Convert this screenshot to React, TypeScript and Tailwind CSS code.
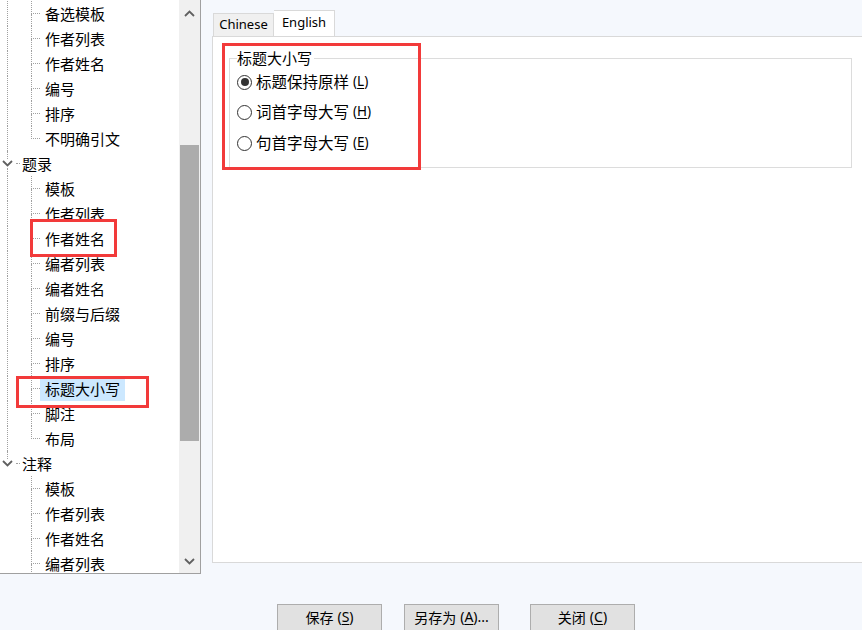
import React from "react";

const FONT = '"Microsoft YaHei", "Noto Sans CJK SC", "Noto Sans", sans-serif';
const LATIN = '"Noto Sans", "Open Sans", "Noto Sans CJK SC", sans-serif';

type Row =
  | { kind: "parent"; label: string; last?: boolean }
  | { kind: "child"; label: string; lastChild?: boolean; parentLast?: boolean; selected?: boolean };

const rows: Row[] = [
  { kind: "child", label: "备选模板" },
  { kind: "child", label: "作者列表" },
  { kind: "child", label: "作者姓名" },
  { kind: "child", label: "编号" },
  { kind: "child", label: "排序" },
  { kind: "child", label: "不明确引文", lastChild: true },
  { kind: "parent", label: "题录" },
  { kind: "child", label: "模板" },
  { kind: "child", label: "作者列表" },
  { kind: "child", label: "作者姓名" },
  { kind: "child", label: "编者列表" },
  { kind: "child", label: "编者姓名" },
  { kind: "child", label: "前缀与后缀" },
  { kind: "child", label: "编号" },
  { kind: "child", label: "排序" },
  { kind: "child", label: "标题大小写", selected: true },
  { kind: "child", label: "脚注" },
  { kind: "child", label: "布局", lastChild: true },
  { kind: "parent", label: "注释", last: true },
  { kind: "child", label: "模板", parentLast: true },
  { kind: "child", label: "作者列表", parentLast: true },
  { kind: "child", label: "作者姓名", parentLast: true },
  { kind: "child", label: "编者列表", parentLast: true },
];

const DOT = "border-dotted border-[#a0a0a0]";

function Chevron({ up }: { up?: boolean }) {
  return (
    <svg width="11" height="7" viewBox="0 0 11 7">
      <polyline
        points={up ? "1,6 5.5,1.5 10,6" : "1,1 5.5,5.5 10,1"}
        fill="none"
        stroke="#606060"
        strokeWidth="1.8"
      />
    </svg>
  );
}

function TreeRow({ row }: { row: Row }) {
  if (row.kind === "parent") {
    return (
      <div className="flex h-[25px] items-stretch">
        <div className="flex w-[15px] flex-col">
          <div className={`ml-[7px] h-[8px] border-l ${DOT}`} />
          <div className="flex h-[9px] items-center justify-start pl-[2px]">
            <Chevron />
          </div>
          <div className={`ml-[7px] flex-1 ${row.last ? "" : `border-l ${DOT}`}`} />
        </div>
        <div className="flex w-[7px] items-center">
          <div className={`ml-[1px] w-[4px] border-t ${DOT}`} />
        </div>
        <div className="flex items-center text-[15px] leading-none text-black">
          {row.label}
        </div>
      </div>
    );
  }
  return (
    <div className="flex h-[25px] items-stretch">
      <div className={`ml-[7px] w-[24px] ${row.parentLast ? "" : `border-l ${DOT}`}`} />
      <div className="flex w-[9px] flex-col">
        <div className={`h-[13px] border-l border-b ${DOT}`} />
        <div className={`flex-1 ${row.lastChild ? "" : `border-l ${DOT}`}`} />
      </div>
      <div className="flex items-center">
        <div
          className={`flex h-[24px] items-center px-[5px] text-[15px] leading-none text-black ${
            row.selected ? "bg-[#cce8ff]" : ""
          }`}
        >
          {row.label}
        </div>
      </div>
    </div>
  );
}

function Radio({ checked, label, hot }: { checked?: boolean; label: string; hot: string }) {
  return (
    <div className="flex h-[30px] items-center">
      <div className="flex h-[15px] w-[15px] items-center justify-center rounded-full border border-[#333333] bg-white">
        {checked && <div className="h-[8px] w-[8px] rounded-full bg-[#333333]" />}
      </div>
      <span className="ml-[4px] text-[15.5px] leading-none text-black">{label}</span>
      <span className="ml-[4px] text-[13.5px] leading-none text-black" style={{ fontFamily: LATIN }}>
        (<span className="underline underline-offset-2">{hot}</span>)
      </span>
    </div>
  );
}

function Btn({ label, hot, rest, w }: { label: string; hot: string; rest?: string; w: string }) {
  return (
    <div
      className={`${w} flex h-[28px] items-start justify-center border border-[#adadad] bg-[#e1e1e1] pt-[3px] text-[14px] leading-[18px] text-black`}
    >
      <span>{label} </span>
      <span className="ml-[4px]" style={{ fontFamily: LATIN }}>
        (<span className="underline underline-offset-2">{hot}</span>){rest}
      </span>
    </div>
  );
}

export default function App() {
  return (
    <div
      className="relative flex h-[630px] w-[862px] flex-col overflow-hidden bg-[#f5f8fd]"
      style={{ fontFamily: FONT }}
    >
      <div className="flex h-[574px] items-start">
        {/* Left tree panel */}
        <div className="flex h-[574px] w-[201px] shrink-0 border-r border-b border-[#a0a0a0] bg-white">
          <div className="flex-1 overflow-hidden pt-[1px]">
            {rows.map((r, i) => (
              <TreeRow key={i} row={r} />
            ))}
          </div>
          <div className="flex w-[21px] flex-col bg-[#f0f0f0]">
            <div className="flex h-[26px] items-center justify-center">
              <Chevron up />
            </div>
            <div className="flex-1">
              <div className="mx-[1px] mt-[119px] h-[296px] bg-[#acacac]" />
            </div>
            <div className="flex h-[24px] items-center justify-center">
              <Chevron />
            </div>
          </div>
        </div>

        {/* Right tab panel */}
        <div className="ml-[11px] flex h-[563px] w-[670px] shrink-0 flex-col pt-[10px]">
          <div className="flex h-[26px] items-end pl-[1px]">
            <div
              className="flex h-[23px] w-[61px] items-center justify-center border border-b-0 border-[#d9d9d9] bg-[#f0f0f0] text-[13px] text-black"
              style={{ fontFamily: LATIN }}
            >
              Chinese
            </div>
            <div
              className="-mb-px flex h-[27px] w-[61px] items-start justify-center border border-b-0 border-l-0 border-[#d9d9d9] bg-white pt-[2px] text-[13px] text-black"
              style={{ fontFamily: LATIN }}
            >
              English
            </div>
          </div>
          <div className="flex-1 border border-[#d9d9d9] bg-white pl-[16px] pt-[21px]">
            <div className="h-[110px] w-[623px] border border-[#dcdcdc] pl-[7px]">
              <div className="-mt-[11px] flex">
                <span className="bg-white pr-[2px] text-[15px] leading-[20px] text-black">标题大小写</span>
              </div>
              <div className="mt-[-1px]">
                <Radio checked label="标题保持原样" hot="L" />
                <Radio label="词首字母大写" hot="H" />
                <div className="mt-[1px]">
                  <Radio label="句首字母大写" hot="E" />
                </div>
              </div>
            </div>
          </div>
        </div>
      </div>

      {/* Buttons */}
      <div className="mt-[30px] flex pl-[277px]">
        <Btn label="保存" hot="S" w="w-[105px]" />
        <div className="ml-[22px]">
          <Btn label="另存为" hot="A" rest="..." w="w-[95px]" />
        </div>
        <div className="ml-[31px]">
          <Btn label="关闭" hot="C" w="w-[105px]" />
        </div>
      </div>

      {/* Red annotation boxes */}
      <div className="pointer-events-none absolute left-[30px] top-[219px] h-[38px] w-[87px] border-[3px] border-[#f23a3a]" />
      <div className="pointer-events-none absolute left-[16px] top-[376px] h-[32px] w-[133px] border-[3px] border-[#f23a3a]" />
      <div className="pointer-events-none absolute left-[222px] top-[43px] h-[127px] w-[199px] border-[3px] border-[#f23a3a]" />
    </div>
  );
}
